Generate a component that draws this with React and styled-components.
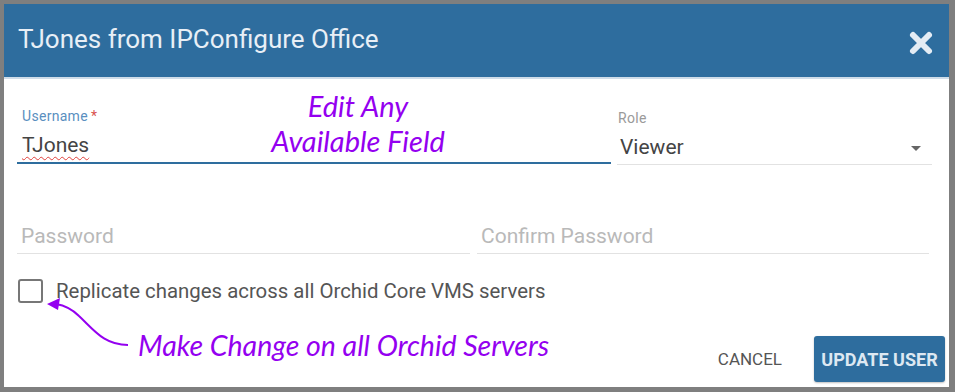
import styled, { createGlobalStyle } from 'styled-components';

const Global = createGlobalStyle`
  html, body { margin: 0; padding: 0; }
  body { background: #7f7f7f; font-family: Roboto, "Liberation Sans", sans-serif; }
`;

const App = () => {
  return (
    <>
      <Global />
      <Frame>
        <Dialog>
          <Header>
            <Title>TJones from IPConfigure Office</Title>
            <CloseButton aria-label="close">
              <svg width="26" height="26" viewBox="0 0 26 26">
                <path d="M5 5 L21 21 M21 5 L5 21" stroke="#e4ecf4" strokeWidth="6" strokeLinecap="round" />
              </svg>
            </CloseButton>
          </Header>
          <Body>
            <Row cols="594px 315px" gap="6px">
              <Field>
                <Label active>Username<Req>*</Req></Label>
                <Value active>
                  <Squiggle>TJones</Squiggle>
                </Value>
              </Field>
              <Field>
                <Label>Role</Label>
                <Value>
                  Viewer
                  <Caret />
                </Value>
              </Field>
            </Row>
            <Row cols="453px 452px" gap="7px" top="51px">
              <Field>
                <Value placeholder>Password</Value>
              </Field>
              <Field>
                <Value placeholder>Confirm Password</Value>
              </Field>
            </Row>
            <CheckRow>
              <Box />
              <CheckText>Replicate changes across all Orchid Core VMS servers</CheckText>
            </CheckRow>
          </Body>
          <Actions>
            <TextButton>CANCEL</TextButton>
            <PrimaryButton>UPDATE USER</PrimaryButton>
          </Actions>

          <Note top="84px" left="241px" width="226px" center>Edit Any<br />Available Field</Note>
          <Note top="324px" left="134px">Make Change on all Orchid Servers</Note>
          <Arrow width="100" height="60" viewBox="0 0 100 60">
            <path d="M84 79 C60 79 50 64 35 50 C26 41 18 39 12 38" fill="none" stroke="#9400f0" strokeWidth="2" />
            <path d="M3 38 L16 32 L14 44 Z" fill="#9400f0" />
          </Arrow>
        </Dialog>
      </Frame>
    </>
  );
};

const Frame = styled.div`
  width: 955px;
  height: 392px;
  box-sizing: border-box;
  padding: 4px 6px 5px 4px;
  background: #7f7f7f;
`;

const Dialog = styled.div`
  position: relative;
  width: 945px;
  height: 383px;
  background: #fff;
  display: flex;
  flex-direction: column;
  overflow: hidden;
`;

const Header = styled.div`
  height: 75px;
  background: #2e6d9e;
  border-bottom: 2px solid #cfdde9;
  display: flex;
  align-items: center;
  justify-content: space-between;
  padding: 0 15px 0 14px;
  box-sizing: border-box;
  flex-shrink: 0;
`;

const Title = styled.div`
  color: #e8eff6;
  font-size: 26px;
  margin-top: -4px;
`;

const CloseButton = styled.div`
  display: flex;
  margin-top: 5px;
`;

const Body = styled.div`
  padding: 29px 17px 0 13px;
  display: flex;
  flex-direction: column;
`;

const Row = styled.div`
  display: grid;
  grid-template-columns: ${p => p.cols};
  column-gap: ${p => p.gap};
  margin-top: ${p => p.top || 0};
`;

const Field = styled.div`
  display: flex;
  flex-direction: column;
  justify-content: flex-end;
`;

const Label = styled.div`
  font-size: 14px;
  letter-spacing: 0.3px;
  line-height: 16px;
  color: ${p => (p.active ? '#5a8fc0' : '#9a9a9a')};
  padding-left: ${p => (p.active ? '5px' : '1px')};
  height: 16px;
`;

const Req = styled.span`
  color: #d9534f;
  margin-left: 3px;
`;

const Value = styled.div`
  position: relative;
  font-size: 21px;
  line-height: 25px;
  color: ${p => (p.placeholder ? '#b9b9b9' : '#444')};
  padding: 9px 0 4px ${p => (p.active ? '5px' : p.placeholder ? '4px' : '3px')};
  border-bottom: ${p => (p.active ? '2px solid #2e6d9e' : '1px solid #e2e2e2')};
  margin-bottom: ${p => (p.active ? '0' : '-1px')};
`;

const Squiggle = styled.span`
  text-decoration: underline wavy #e0413c;
  text-decoration-thickness: 1px;
  text-underline-offset: 4px;
`;

const Caret = styled.span`
  position: absolute;
  right: 11px;
  top: 20px;
  border-left: 5px solid transparent;
  border-right: 5px solid transparent;
  border-top: 5px solid #666;
`;

const CheckRow = styled.div`
  display: flex;
  align-items: center;
  gap: 13px;
  margin-top: 26px;
  padding-left: 1px;
`;

const Box = styled.div`
  width: 21px;
  height: 20px;
  border: 2px solid #777;
  border-radius: 3px;
`;

const CheckText = styled.div`
  font-size: 20.4px;
  color: #555;
`;

const Actions = styled.div`
  margin-top: auto;
  display: flex;
  justify-content: flex-end;
  align-items: center;
  gap: 32px;
  padding: 0 4px 5px 0;
`;

const TextButton = styled.div`
  font-size: 17px;
  color: #555;
  margin-top: -1px;
`;

const PrimaryButton = styled.div`
  background: #2e6d9e;
  color: #dde8f2;
  font-size: 18px;
  font-weight: 700;
  height: 46px;
  width: 131px;
  border-radius: 3px;
  display: flex;
  align-items: center;
  justify-content: center;
  box-shadow: 0 1px 2px rgba(0, 0, 0, 0.25);
`;

const Note = styled.div`
  position: absolute;
  top: ${p => p.top};
  left: ${p => p.left};
  width: ${p => p.width || 'auto'};
  color: #9400f0;
  font-family: Lato, "Open Sans", sans-serif;
  font-style: italic;
  font-size: ${p => (p.center ? '29px' : '28.5px')};
  line-height: 35px;
  white-space: nowrap;
  text-align: ${p => (p.center ? 'center' : 'left')};
`;

const Arrow = styled.svg`
  position: absolute;
  left: 40px;
  top: 262px;
  overflow: visible;
`;

export default App;
